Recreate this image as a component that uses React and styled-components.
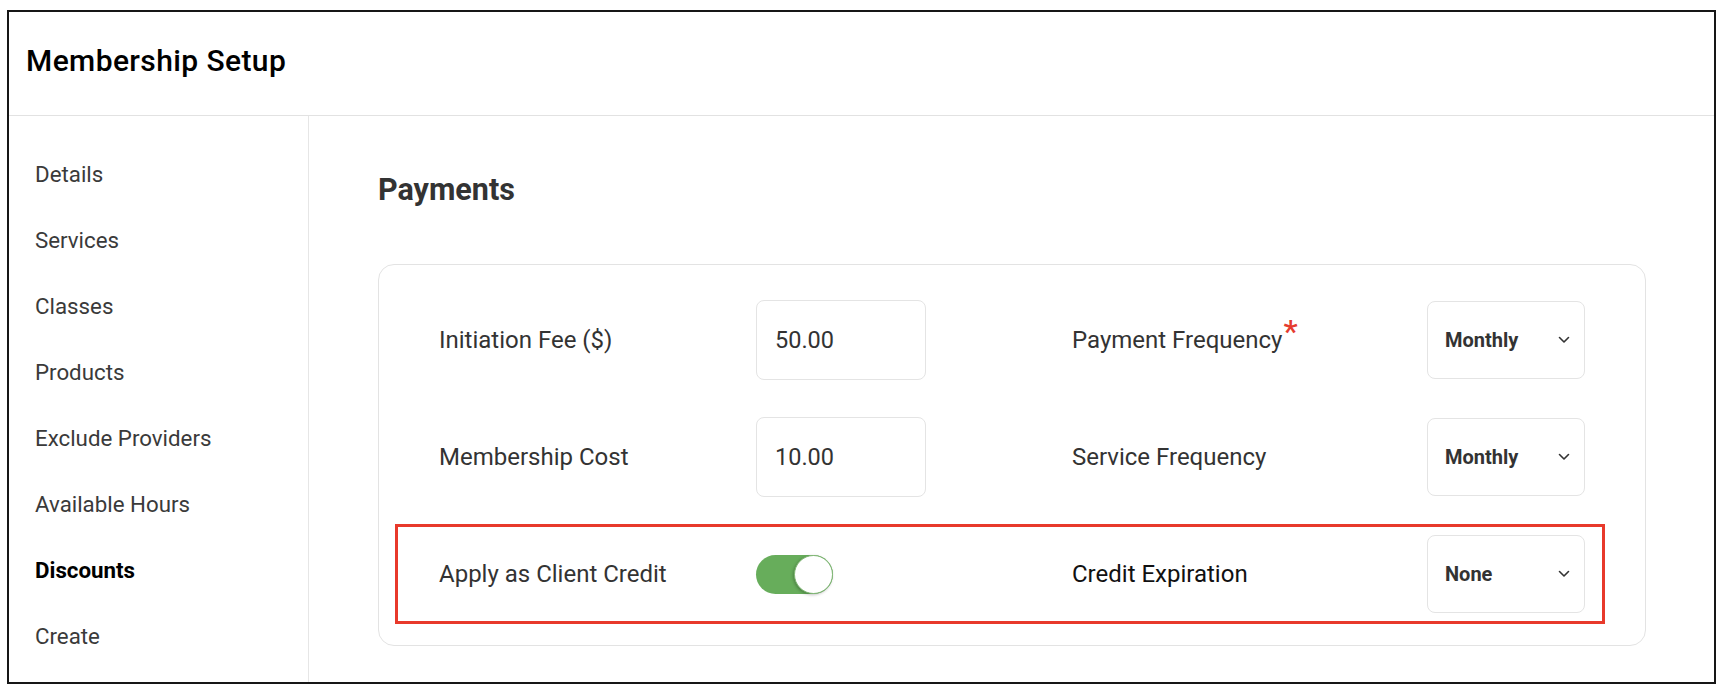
import React from 'react';
import styled, { createGlobalStyle } from 'styled-components';

const GlobalStyle = createGlobalStyle`
  body {
    margin: 0;
    background: #ffffff;
    font-family: Roboto, 'Liberation Sans', sans-serif;
  }
`;

const navItems = [
  'Details',
  'Services',
  'Classes',
  'Products',
  'Exclude Providers',
  'Available Hours',
  'Discounts',
  'Create',
];

const ChevronDown = () => (
  <svg width="12" height="8" viewBox="0 0 12 8" fill="none">
    <polyline
      points="1.5,1.5 6,6 10.5,1.5"
      stroke="#333"
      strokeWidth="1.6"
      strokeLinecap="round"
      strokeLinejoin="round"
    />
  </svg>
);

const App = () => {
  return (
    <>
      <GlobalStyle />
      <Page>
        <Frame>
          <Header>
            <Title>Membership Setup</Title>
          </Header>

          <Body>
            <Sidebar>
              {navItems.map((item) => (
                <NavItem key={item} $active={item === 'Discounts'}>
                  {item}
                </NavItem>
              ))}
            </Sidebar>

            <Main>
              <SectionTitle>Payments</SectionTitle>

              <Card>
                <Row>
                  <Label>Initiation Fee ($)</Label>
                  <Field defaultValue="50.00" />
                  <Label>
                    Payment Frequency<Required>*</Required>
                  </Label>
                  <Select>
                    Monthly <ChevronDown />
                  </Select>
                </Row>

                <Row>
                  <Label>Membership Cost</Label>
                  <Field defaultValue="10.00" />
                  <Label>Service Frequency</Label>
                  <Select>
                    Monthly <ChevronDown />
                  </Select>
                </Row>

                <Row $highlight>
                  <Label>Apply as Client Credit</Label>
                  <Toggle $on>
                    <Knob />
                  </Toggle>
                  <Label $dark>Credit Expiration</Label>
                  <Select>
                    None <ChevronDown />
                  </Select>
                </Row>
              </Card>
            </Main>
          </Body>
        </Frame>
      </Page>
    </>
  );
};

export default App;

const Page = styled.div`
  padding: 10px 0 0 7px;
`;

const Frame = styled.div`
  width: 1709px;
  height: 674px;
  box-sizing: border-box;
  border: 2px solid #161616;
  display: flex;
  flex-direction: column;
  background: #fff;
`;

const Header = styled.div`
  height: 104px;
  box-sizing: border-box;
  border-bottom: 1px solid #e2e2e2;
  display: flex;
  align-items: center;
  padding: 0 0 6px 17px;
`;

const Title = styled.h1`
  margin: 0;
  font-size: 30px;
  font-weight: 500;
  color: #000;
  letter-spacing: 0.4px;
`;

const Body = styled.div`
  flex: 1;
  display: flex;
`;

const Sidebar = styled.nav`
  width: 300px;
  box-sizing: border-box;
  border-right: 1px solid #e6e6e6;
  padding: 25px 0 0 26px;
`;

const NavItem = styled.div`
  height: 66px;
  line-height: 66px;
  font-size: 22.3px;
  color: ${(p) => (p.$active ? '#000' : '#3a3a3a')};
  font-weight: ${(p) => (p.$active ? 700 : 400)};
`;

const Main = styled.main`
  flex: 1;
  padding: 56px 68px 0 69px;
`;

const SectionTitle = styled.h2`
  margin: 0 0 56px;
  font-size: 30.5px;
  line-height: 36px;
  font-weight: 700;
  color: #333;
`;

const Card = styled.div`
  border: 1px solid #e3e3e3;
  border-radius: 16px;
  padding: 25px 40px 21px 16px;
  display: flex;
  flex-direction: column;
  gap: 17px;
`;

const Row = styled.div`
  height: 100px;
  box-sizing: border-box;
  border: 3px solid ${(p) => (p.$highlight ? '#e8392b' : 'transparent')};
  padding: 0 17px 0 41px;
  display: grid;
  grid-template-columns: 317px 316px 1fr 158px;
  align-items: center;
`;

const Label = styled.div`
  font-size: 24px;
  color: ${(p) => (p.$dark ? '#111' : '#333')};
`;

const Required = styled.span`
  color: #e53b2f;
  font-size: 32px;
  font-weight: 500;
  vertical-align: 6px;
  line-height: 0;
  margin-left: 1px;
`;

const Field = styled.input`
  width: 170px;
  height: 80px;
  box-sizing: border-box;
  border: 1px solid #e4e4e4;
  border-radius: 8px;
  padding: 0 18px;
  font-family: Roboto, 'Liberation Sans', sans-serif;
  font-size: 23.5px;
  color: #333;
  outline: none;
  background: #fff;
`;

const Select = styled.div`
  width: 158px;
  height: 78px;
  box-sizing: border-box;
  border: 1px solid #e4e4e4;
  border-radius: 8px;
  padding: 0 14px 0 17px;
  display: flex;
  align-items: center;
  justify-content: space-between;
  font-size: 20px;
  font-weight: 700;
  color: #333;
`;

const Toggle = styled.div`
  width: 77px;
  height: 39px;
  border-radius: 20px;
  background: ${(p) => (p.$on ? '#67ad5b' : '#ccc')};
  display: flex;
  justify-content: ${(p) => (p.$on ? 'flex-end' : 'flex-start')};
  align-items: center;
`;

const Knob = styled.div`
  width: 39px;
  height: 39px;
  box-sizing: border-box;
  border-radius: 50%;
  background: #fff;
  border: 1px solid #7fb774;
  box-shadow: -1px 1px 3px rgba(0, 0, 0, 0.25);
`;
